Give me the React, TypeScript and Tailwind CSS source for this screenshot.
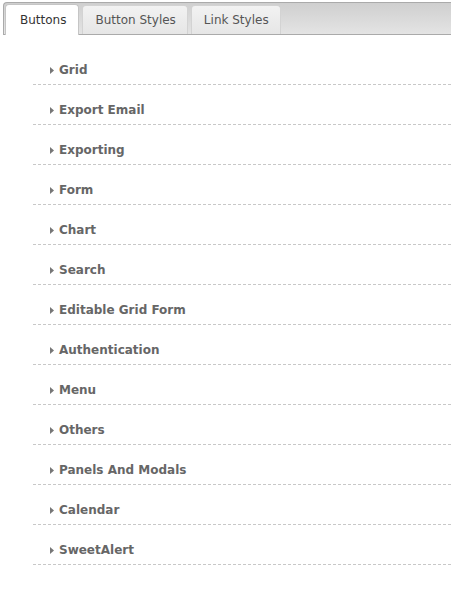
import React from "react";

const items = [
  "Grid",
  "Export Email",
  "Exporting",
  "Form",
  "Chart",
  "Search",
  "Editable Grid Form",
  "Authentication",
  "Menu",
  "Others",
  "Panels And Modals",
  "Calendar",
  "SweetAlert",
];

const tabs = ["Buttons", "Button Styles", "Link Styles"];

export default function App() {
  return (
    <div className="min-h-[602px] w-[451px] bg-white font-['DejaVu_Sans',Verdana,sans-serif] overflow-hidden">
      <div className="ml-[3px] mt-[2px] h-[33px] rounded-tl-[4px] border border-r-0 border-[#aaaaaa] bg-gradient-to-b from-[#cfcfcf] to-[#e4e4e4] flex items-end pl-[1px] gap-[3px]">
        {tabs.map((t, i) => (
          <div
            key={t}
            className={
              i === 0
                ? "h-[31px] -mb-px pl-[14px] pr-[12px] flex items-center rounded-t-[4px] border border-b-0 border-[#c5c5c5] bg-white text-[12px] text-[#333]"
                : "h-[29px] pl-[12px] pr-[11px] flex items-center rounded-t-[4px] border border-b-0 border-[#d3d3d3] bg-gradient-to-b from-[#f2f2f2] to-[#e6e6e6] text-[12px] text-[#555]"
            }
          >
            {t}
          </div>
        ))}
      </div>
      <ul className="ml-[33px] mt-[10px]">
        {items.map((it) => (
          <li
            key={it}
            className="h-[40px] flex items-end pb-[6px] pl-[17px] border-b border-dashed border-[#c8c8c8]"
          >
            <span className="flex items-center gap-[5px] text-[12px] font-bold text-[#666] leading-[16px]">
              <svg width="4" height="7" viewBox="0 0 4 7" className="shrink-0">
                <path d="M0 0L4 3.5L0 7Z" fill="#777" />
              </svg>
              {it}
            </span>
          </li>
        ))}
      </ul>
    </div>
  );
}
